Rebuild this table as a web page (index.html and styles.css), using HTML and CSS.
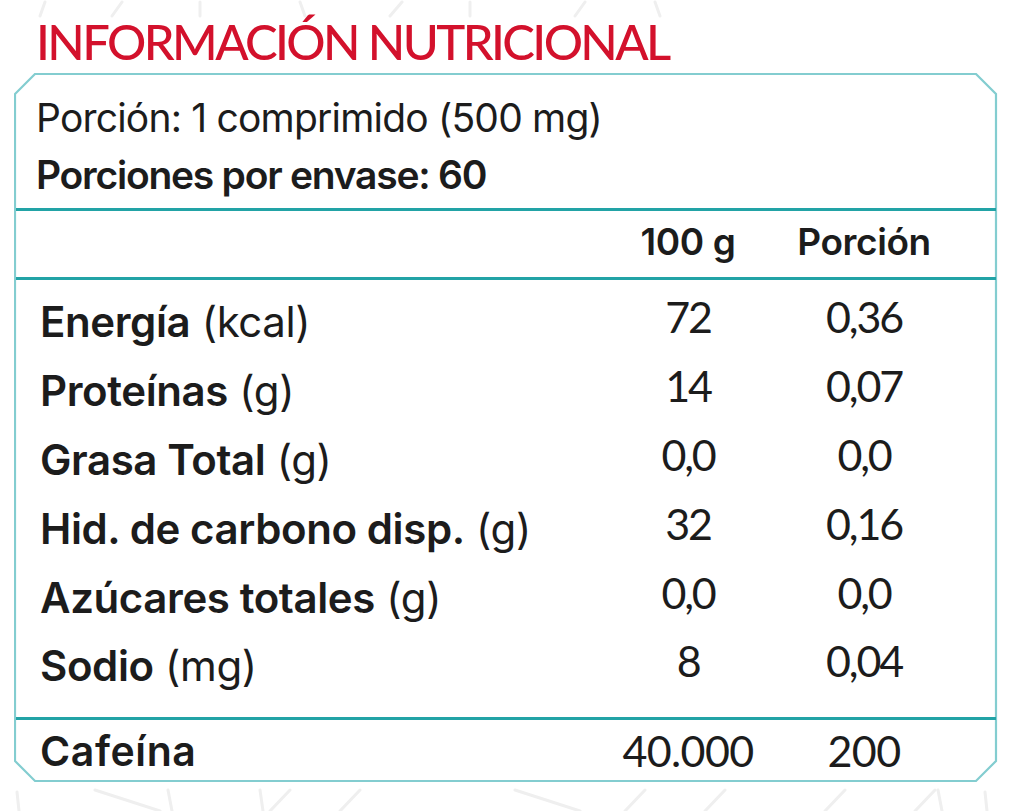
FILE: index.html
```html
<!DOCTYPE html>
<html lang="es">
<head>
<meta charset="utf-8">
<title>Información nutricional</title>
<link rel="stylesheet" href="styles.css">
</head>
<body>
<div class="page">
  <svg class="watermark" width="1013" height="811" viewBox="0 0 1013 811" aria-hidden="true">
    <g stroke="#efefef" stroke-width="3" fill="none" stroke-linecap="round">
      <line x1="45" y1="2" x2="40" y2="16"/>
      <line x1="122" y1="2" x2="112" y2="16"/>
      <line x1="200" y1="2" x2="200" y2="16"/>
      <line x1="300" y1="2" x2="305" y2="16"/>
      <line x1="402" y1="2" x2="390" y2="16"/>
      <line x1="470" y1="2" x2="470" y2="16"/>
      <line x1="585" y1="2" x2="575" y2="16"/>
      <line x1="655" y1="2" x2="660" y2="16"/>
      <line x1="17" y1="792" x2="19" y2="811"/>
      <line x1="95" y1="790" x2="160" y2="811"/>
      <line x1="168" y1="790" x2="172" y2="811"/>
      <line x1="260" y1="790" x2="263" y2="811"/>
      <line x1="290" y1="790" x2="270" y2="811"/>
      <line x1="360" y1="790" x2="340" y2="811"/>
      <line x1="515" y1="790" x2="580" y2="811"/>
      <line x1="645" y1="790" x2="625" y2="811"/>
      <line x1="725" y1="790" x2="705" y2="811"/>
      <line x1="845" y1="790" x2="825" y2="811"/>
      <line x1="935" y1="790" x2="915" y2="811"/>
      <line x1="938" y1="790" x2="942" y2="811"/>
      <line x1="985" y1="792" x2="987" y2="811"/>
    </g>
  </svg>

  <h1 class="title">INFORMACIÓN NUTRICIONAL</h1>

  <section class="panel">
    <svg class="outline" width="984" height="710" viewBox="0 0 984 710" aria-hidden="true">
      <polygon points="21,1 962,1 982,21 982,688 962,708 21,708 1,688 1,21" fill="#ffffff" stroke="#83cdd0" stroke-width="2.2"/>
    </svg>

    <div class="serving">
      <p class="serving-size">Porción: 1 comprimido (500 mg)</p>
      <p class="serving-count">Porciones por envase: 60</p>
    </div>

    <div class="grid head">
      <span class="label"></span>
      <span class="col">100 g</span>
      <span class="col">Porción</span>
    </div>

    <div class="body">
      <div class="grid row">
        <span class="label"><b>Energía</b> (kcal)</span>
        <span class="val">72</span>
        <span class="val">0,36</span>
      </div>
      <div class="grid row">
        <span class="label"><b>Proteínas</b> (g)</span>
        <span class="val">14</span>
        <span class="val">0,07</span>
      </div>
      <div class="grid row">
        <span class="label"><b>Grasa Total</b> (g)</span>
        <span class="val">0,0</span>
        <span class="val">0,0</span>
      </div>
      <div class="grid row">
        <span class="label"><b>Hid. de carbono disp.</b> (g)</span>
        <span class="val">32</span>
        <span class="val">0,16</span>
      </div>
      <div class="grid row">
        <span class="label"><b>Azúcares totales</b> (g)</span>
        <span class="val">0,0</span>
        <span class="val">0,0</span>
      </div>
      <div class="grid row">
        <span class="label"><b>Sodio</b> (mg)</span>
        <span class="val">8</span>
        <span class="val">0,04</span>
      </div>
    </div>

    <div class="grid total">
      <span class="label"><b>Cafeína</b></span>
      <span class="val">40.000</span>
      <span class="val">200</span>
    </div>
  </section>
</div>
</body>
</html>
```

FILE: styles.css
```css
* { box-sizing: border-box; }

html, body {
  margin: 0;
  padding: 0;
  background: #ffffff;
}

body {
  font-family: Inter, Lato, "Liberation Sans", sans-serif;
  color: #1c1c1c;
}

.page {
  position: relative;
  width: 1013px;
  height: 811px;
  padding-top: 16px;
  overflow: hidden;
}

.watermark {
  position: absolute;
  left: 0;
  top: 0;
  z-index: 0;
}

.title {
  position: relative;
  margin: 0 0 7px 0;
  padding-left: 36px;
  font-family: Lato, "Liberation Sans", sans-serif;
  font-size: 49px;
  line-height: 50px;
  font-weight: 500;
  color: #d3112c;
  letter-spacing: -2.6px;
}

.panel {
  position: relative;
  margin-left: 14px;
  width: 984px;
  height: 710px;
  padding: 0 2px;
  display: flex;
  flex-direction: column;
}

.outline {
  position: absolute;
  left: 0;
  top: 0;
  z-index: 0;
}

.serving,
.grid {
  position: relative;
  z-index: 1;
}

.serving {
  padding: 16px 0 0 20px;
  height: 135px;
}

.serving p {
  margin: 0;
  font-size: 39px;
  line-height: 57px;
  letter-spacing: -0.8px;
}

.serving .serving-size { font-weight: 400; }
.serving .serving-count {
  font-weight: 600;
  letter-spacing: -1.25px;
}

.grid {
  display: grid;
  grid-template-columns: 1fr 176px 176px;
  padding-left: 24px;
  padding-right: 44px;
}

.col,
.val {
  text-align: center;
}

.head {
  border-top: 3px solid #22a3a6;
  border-bottom: 3px solid #22a3a6;
  height: 73px;
  font-size: 37px;
  line-height: 62px;
  font-weight: 600;
  letter-spacing: -0.4px;
}

.body {
  position: relative;
  z-index: 1;
  padding-top: 8px;
  height: 438px;
}

.row {
  height: 68.8px;
  font-size: 42px;
  line-height: 68.8px;
  align-items: start;
  letter-spacing: -0.4px;
}

.val {
  font-family: Lato, "Liberation Sans", sans-serif;
  font-size: 43px;
  letter-spacing: -1px;
}

.row .val {
  margin-top: -5px;
  letter-spacing: -2.2px;
}

.label b {
  font-weight: 600;
}

.total {
  border-top: 3px solid #22a3a6;
  height: 66px;
  font-size: 41px;
  line-height: 62px;
  letter-spacing: 0.6px;
}

.total .val {
  letter-spacing: -0.6px;
}
```
